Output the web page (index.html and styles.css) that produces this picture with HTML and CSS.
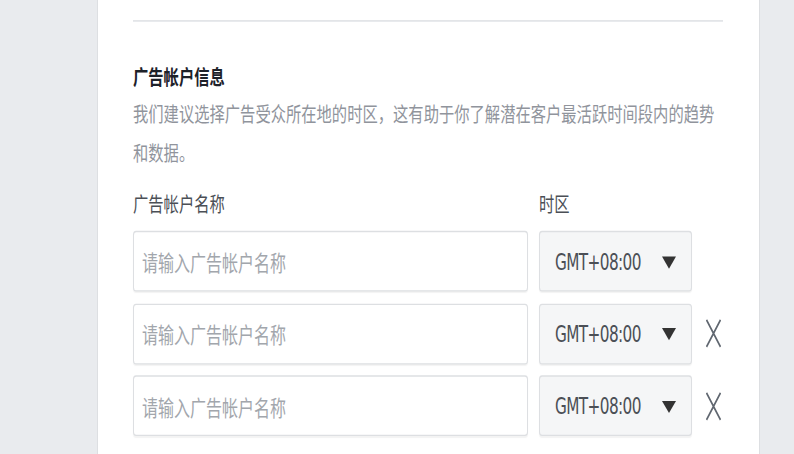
FILE: index.html
```html
<!DOCTYPE html>
<html lang="zh-CN">
<head>
  <meta charset="UTF-8">
  <title>广告帐户信息</title>
  <link rel="stylesheet" href="styles.css">
</head>
<body>

  <div class="card">
    <div class="content">
      <hr class="divider">

      <h3 class="title">广告帐户信息</h3>
      <p class="hint">我们建议选择广告受众所在地的时区，这有助于你了解潜在客户最活跃时间段内的趋势和数据。</p>

      <div class="accounts">
        <label class="label">广告帐户名称</label>
        <label class="label">时区</label>
        <span></span>

        <!-- row 1 -->
        <input class="name" type="text" placeholder="请输入广告帐户名称">
        <div class="tz-wrap">
          <select class="tz"><option>GMT+08:00</option></select>
        </div>
        <span></span>

        <!-- row 2 -->
        <input class="name" type="text" placeholder="请输入广告帐户名称">
        <div class="tz-wrap">
          <select class="tz"><option>GMT+08:00</option></select>
        </div>
        <button class="remove" type="button" aria-label="删除">
          <svg width="17" height="22" viewBox="0 0 17 22"><path d="M1.5 1 L15.5 21 M15.5 1 L1.5 21" stroke="#606770" stroke-width="1.6" fill="none"/></svg>
        </button>

        <!-- row 3 -->
        <input class="name" type="text" placeholder="请输入广告帐户名称">
        <div class="tz-wrap">
          <select class="tz"><option>GMT+08:00</option></select>
        </div>
        <button class="remove" type="button" aria-label="删除">
          <svg width="17" height="22" viewBox="0 0 17 22"><path d="M1.5 1 L15.5 21 M15.5 1 L1.5 21" stroke="#606770" stroke-width="1.6" fill="none"/></svg>
        </button>
      </div>
    </div>
  </div>

</body>
</html>
```

FILE: styles.css
```css
body {
  margin: 0;
  height: 454px;
  overflow: hidden;
  background-color: #e9ebee;
  font-family: "Noto Sans CJK SC", sans-serif;
}

.card {
  margin-left: 97px;
  width: 663px;
  min-height: 454px;
  box-sizing: border-box;
  padding: 0 36px 0 35px;
  background-color: #fff;
  border-left: 1px solid #dddfe2;
  border-right: 1px solid #dddfe2;
}

/* the whole form is drawn a bit taller than wide */
.content {
  padding-top: 15px;
  transform: scaleY(1.35);
  transform-origin: top left;
}

.divider {
  margin: 0;
  height: 0;
  border: 0;
  border-top: 1px solid #dadde1;
}

.title {
  margin: 31px 0 0;
  font-size: 15.3px;
  line-height: 18px;
  font-weight: 700;
  color: #1d2129;
}

.hint {
  margin: 4px 0 0;
  font-size: 15.3px;
  line-height: 29px;
  color: #90949c;
}

.accounts {
  margin-top: 14px;
  display: grid;
  grid-template-columns: 395px 153px 1fr;
  column-gap: 11px;
  row-gap: 8.5px;
  align-items: center;
}

.label {
  margin-bottom: 3.5px;
  font-size: 15.3px;
  line-height: 18px;
  color: #4b4f56;
}

.name {
  width: 100%;
  height: 45px;
  box-sizing: border-box;
  padding: 0 8px;
  border: 1px solid #dddfe2;
  border-radius: 3px;
  box-shadow: 0 1px 1px rgba(0, 0, 0, 0.05);
  font: 16px "Noto Sans CJK SC", sans-serif;
  color: #1d2129;
  outline: none;
}

.name::placeholder {
  color: #a2a6ac;
}

.tz-wrap {
  position: relative;
  height: 45px;
}

.tz {
  appearance: none;
  -webkit-appearance: none;
  width: 100%;
  height: 45px;
  padding: 0 0 0 15px;
  border: 1px solid #dddfe2;
  border-radius: 3px;
  background-color: #f5f6f7;
  box-shadow: 0 1px 1px rgba(0, 0, 0, 0.05);
  font: 17px "DejaVu Sans Condensed", sans-serif;
  letter-spacing: -0.6px;
  color: #4b4f56;
  outline: none;
}

.tz-wrap::after {
  content: "";
  position: absolute;
  right: 16px;
  top: 50%;
  margin-top: -4px;
  border-left: 7px solid transparent;
  border-right: 7px solid transparent;
  border-top: 9px solid #333;
  pointer-events: none;
}

.remove {
  justify-self: center;
  width: 17px;
  height: 22px;
  padding: 0;
  border: none;
  background: none;
  cursor: pointer;
}

.remove svg {
  display: block;
}
```
